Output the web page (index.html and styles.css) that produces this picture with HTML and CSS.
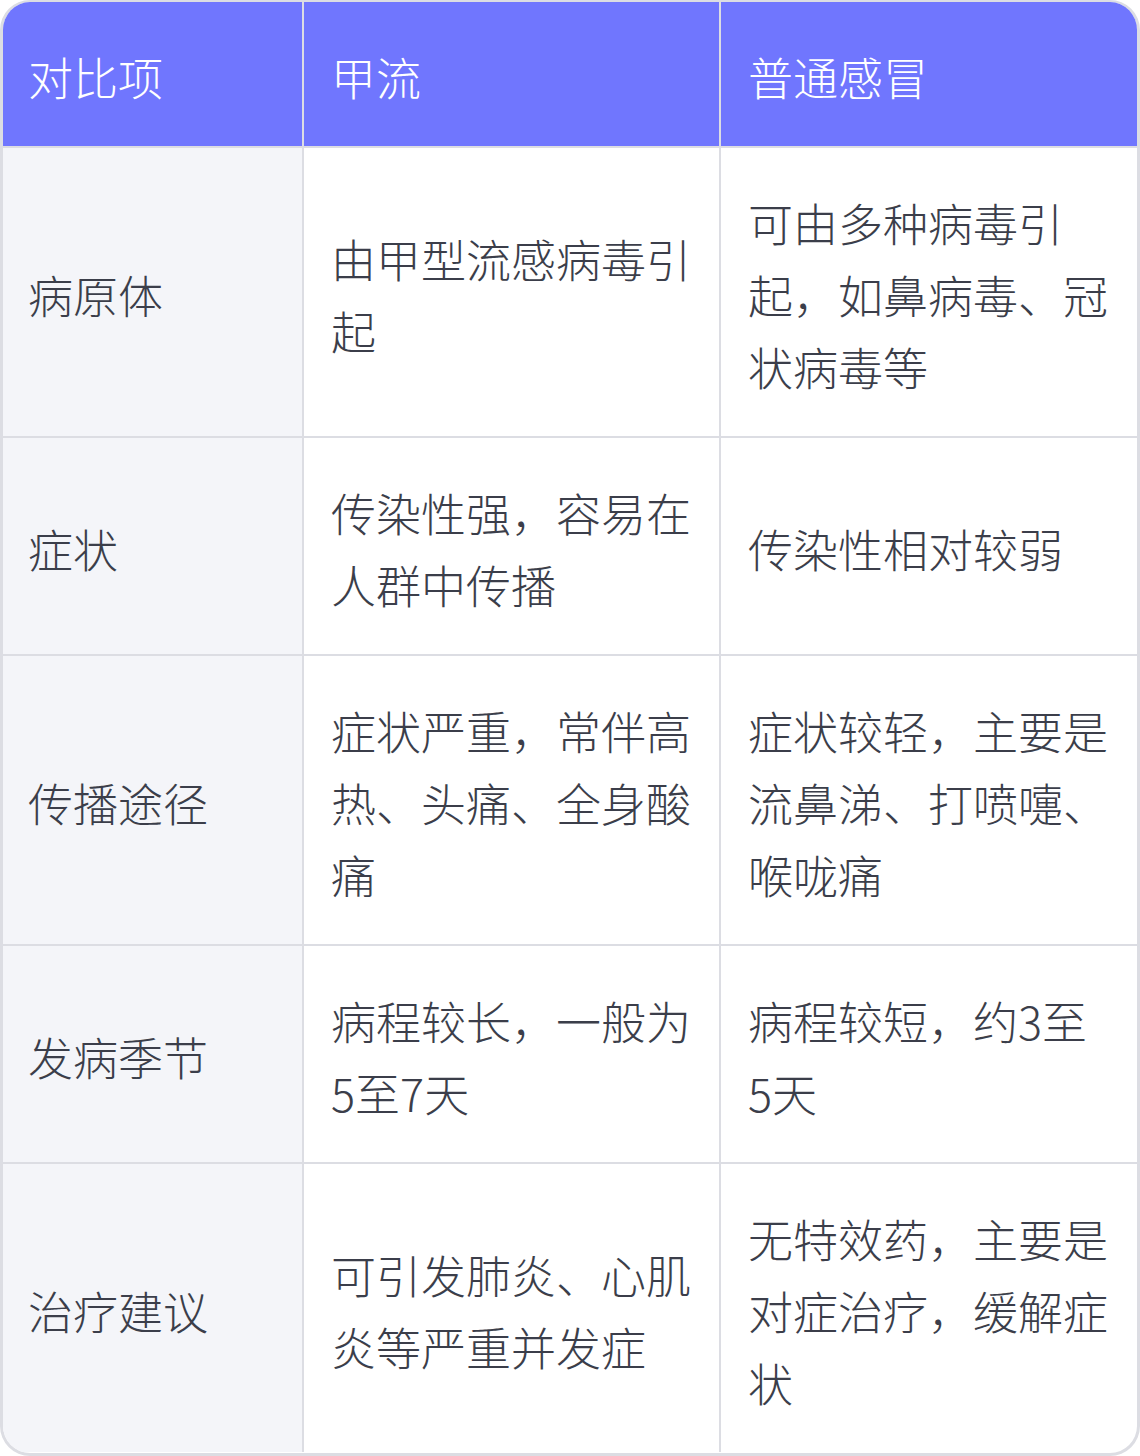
FILE: index.html
```html
<!DOCTYPE html>
<html lang="zh-CN">
<head>
<meta charset="utf-8">
<link rel="stylesheet" href="styles.css">
</head>
<body>
<div class="card">
  <table class="cmp">
    <colgroup>
      <col class="c1"><col class="c2"><col class="c3">
    </colgroup>
    <thead>
      <tr><th>对比项</th><th>甲流</th><th>普通感冒</th></tr>
    </thead>
    <tbody>
      <tr><td>病原体</td><td>由甲型流感病毒引起</td><td>可由多种病毒引起，如鼻病毒、冠状病毒等</td></tr>
      <tr><td>症状</td><td>传染性强，容易在人群中传播</td><td>传染性相对较弱</td></tr>
      <tr><td>传播途径</td><td>症状严重，常伴高热、头痛、全身酸痛</td><td>症状较轻，主要是流鼻涕、打喷嚏、喉咙痛</td></tr>
      <tr><td>发病季节</td><td>病程较长，一般为5至7天</td><td>病程较短，约3至5天</td></tr>
      <tr><td>治疗建议</td><td>可引发肺炎、心肌炎等严重并发症</td><td>无特效药，主要是对症治疗，缓解症状</td></tr>
    </tbody>
  </table>
</div>
</body>
</html>
```

FILE: styles.css
```css
html, body {
  margin: 0;
  padding: 0;
  background: #ffffff;
}
.card {
  width: 1140px;
  height: 1456px;
  box-sizing: border-box;
  border: 3px solid #dcdde3;
  border-top-width: 2px;
  border-radius: 30px;
  overflow: hidden;
  background: #ffffff;
}
.cmp {
  width: 1134px;
  border-collapse: separate;
  border-spacing: 0;
  table-layout: fixed;
  font-family: "Noto Sans CJK SC", "Noto Sans", sans-serif;
  font-weight: 300;
  font-size: 45px;
  line-height: 72px;
  color: #3b3e4a;
}
.c1 { width: 301px; }
.c2 { width: 417px; }
.c3 { width: 416px; }
.cmp th, .cmp td {
  padding: 39px 27px 33px 27px;
  text-align: left;
  vertical-align: middle;
  border-right: 2px solid #dcdde3;
  border-bottom: 2px solid #dcdde3;
  word-break: break-all;
}
.cmp th:first-child, .cmp td:first-child {
  padding-left: 25px;
}
.cmp th {
  background: #7076fe;
  color: #ffffff;
  font-weight: 300;
}
.cmp th:last-child, .cmp td:last-child {
  border-right: none;
}
.cmp tbody tr:last-child td {
  border-bottom: none;
}
.cmp td:first-child {
  background: #f4f5f9;
}
```
